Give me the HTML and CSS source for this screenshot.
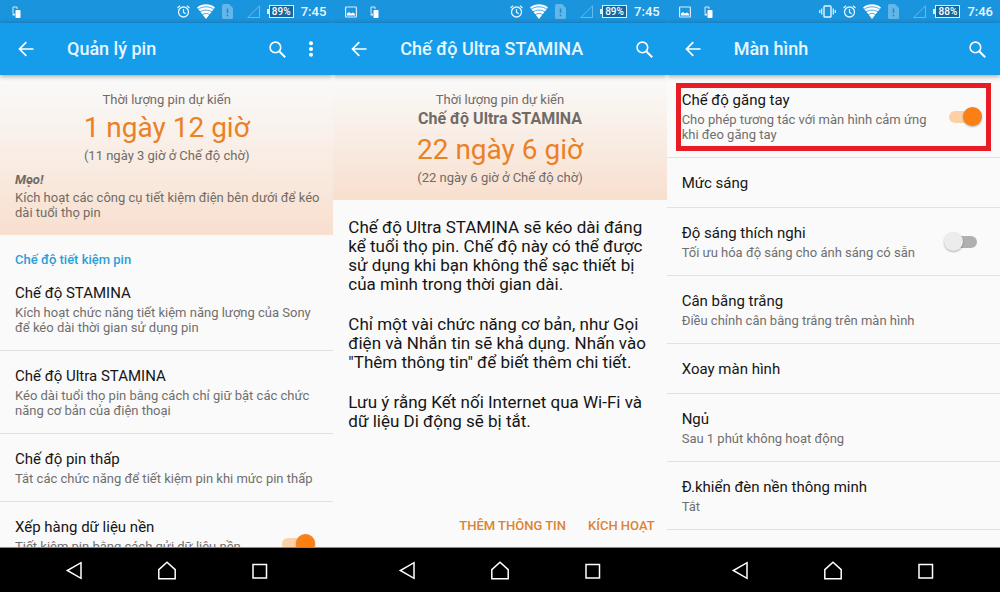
FILE: index.html
```html
<!DOCTYPE html>
<html lang="vi">
<head>
  <meta charset="UTF-8" />
  <meta name="viewport" content="width=device-width, initial-scale=1.0" />
  <title>Quản lý pin</title>
  <link rel="stylesheet" href="styles.css">
</head>
<body>
  <svg class="sprite" aria-hidden="true">
    <symbol id="i-handoff" viewBox="0 0 9 12">
      <path d="M1 7V1h4v2" fill="none" stroke="#d5edfb"/>
      <path d="M0.5 7.5h2.5v2h-2.500z" fill="#d5edfb"/>
      <rect x="3.500" y="4" width="5" height="8" rx="0.8" fill="#fff"/>
    </symbol>
    <symbol id="i-image" viewBox="0 0 12 12">
      <rect x="0.600" y="1" width="10.800" height="10" rx="0.5" fill="none" stroke="#d5edfb" stroke-width="1.200"/>
      <path d="M2 9.500V7.500l2-1.500 2 1.500 2-1 2 1.500v1.500z" fill="#fff"/>
    </symbol>
    <symbol id="i-vibrate" viewBox="0 0 17 13">
      <rect x="5" y="1" width="7" height="11" rx="0.8" fill="none" stroke="#e4f5fd" stroke-width="1.400"/>
      <path d="M2.700 3.500v6M0.700 5v3M14.300 3.500v6M16.300 5v3" stroke="#e4f5fd" stroke-width="1.200"/>
    </symbol>
    <symbol id="i-alarm" viewBox="0 0 13 13">
      <circle cx="6.500" cy="7" r="5" fill="none" stroke="#e4f5fd" stroke-width="1.300"/>
      <path d="M6.500 4v3.300l2.200 1.400M0.500 3l2.600-2.200M12.500 3L9.900 0.800" fill="none" stroke="#e4f5fd" stroke-width="1.200"/>
    </symbol>
    <symbol id="i-wifi" viewBox="0 0 18 15">
      <path d="M0 3.500C5-.8 13-.8 18 3.500L9 15z" fill="#fff"/>
      <path d="M0.500 5.600c5-3.700 12-3.700 17 0M2.500 8.200c4-2.800 9-2.800 13 0M4.800 10.900c3-1.900 5.600-1.900 8.400 0" fill="none" stroke="#1a94dc" stroke-width="0.800"/>
    </symbol>
    <symbol id="i-sim" viewBox="0 0 11 15">
      <path d="M0 1.500Q0 0 1.500 0H7l4 4v9.500q0 1.500-1.500 1.500h-8Q0 15 0 13.500z" fill="#62b6e9"/>
      <path d="M5.500 4.500v4.500M5.500 10.500v1.700" stroke="#1a8ad0" stroke-width="1.500"/>
    </symbol>
    <symbol id="i-signal" viewBox="0 0 22 13">
      <path d="M7.800 12.500H19.500V0.800z" fill="none" stroke="#6fc0ee" stroke-width="0.900"/>
    </symbol>
    <symbol id="i-back" viewBox="0 0 16 16">
      <path d="M15.500 8H1.800M8.300 1.200L1.500 8l6.800 6.800" fill="none" stroke="#fff" stroke-width="1.700"/>
    </symbol>
    <symbol id="i-search" viewBox="0 0 17 17">
      <circle cx="6.400" cy="6.400" r="5.300" fill="none" stroke="#fff" stroke-width="1.600"/>
      <path d="M10.200 10.200l6 6" stroke="#fff" stroke-width="2"/>
    </symbol>
    <symbol id="i-more" viewBox="0 0 16 16">
      <circle cx="8" cy="2.200" r="2" fill="#fff"/>
      <circle cx="8" cy="8" r="2" fill="#fff"/>
      <circle cx="8" cy="13.800" r="2" fill="#fff"/>
    </symbol>
    <symbol id="i-nav-back" viewBox="0 0 20 20">
      <path d="M17 2.700v15.600L3.300 10.500z" fill="none" stroke="#fff" stroke-width="1.500"/>
    </symbol>
    <symbol id="i-nav-home" viewBox="0 0 20 20">
      <path d="M1.800 18.700V9.700L10 2.200l8.200 7.500v9z" fill="none" stroke="#fff" stroke-width="1.500"/>
    </symbol>
    <symbol id="i-nav-recent" viewBox="0 0 20 20">
      <rect x="3" y="4.500" width="13.500" height="13.500" fill="none" stroke="#fff" stroke-width="1.500"/>
    </symbol>
  </svg>

  <main class="phones">
    <!-- Battery management -->
    <section class="phone">
      <div class="status">
        <svg class="i-handoff"><use href="#i-handoff"/></svg>
        <div class="status-right">
          <svg class="i-alarm"><use href="#i-alarm"/></svg>
          <svg class="i-wifi"><use href="#i-wifi"/></svg>
          <svg class="i-sim"><use href="#i-sim"/></svg>
          <svg class="i-signal"><use href="#i-signal"/></svg>
          <span class="battery">89%</span>
          <span class="time">7:45</span>
        </div>
      </div>
      <header class="appbar">
        <button aria-label="Quay lại"><svg class="i-back"><use href="#i-back"/></svg></button>
        <h1>Quản lý pin</h1>
        <button aria-label="Tìm kiếm"><svg class="i-search"><use href="#i-search"/></svg></button>
        <button aria-label="Tùy chọn khác"><svg class="i-more"><use href="#i-more"/></svg></button>
      </header>
      <div class="content">
        <div class="estimate">
          <p>Thời lượng pin dự kiến</p>
          <p class="big">1 ngày 12 giờ</p>
          <p>(11 ngày 3 giờ ở Chế độ chờ)</p>
          <div class="tip">
            <strong>Mẹo!</strong>
            <p>Kích hoạt các công cụ tiết kiệm điện bên dưới để kéo dài tuổi thọ pin</p>
          </div>
        </div>
        <h2 class="group">Chế độ tiết kiệm pin</h2>
        <ul class="list">
          <li class="row">
            <div class="text">
              <h3>Chế độ STAMINA</h3>
              <p>Kích hoạt chức năng tiết kiệm năng lượng của Sony để kéo dài thời gian sử dụng pin</p>
            </div>
          </li>
          <li class="row">
            <div class="text">
              <h3>Chế độ Ultra STAMINA</h3>
              <p>Kéo dài tuổi thọ pin bằng cách chỉ giữ bật các chức năng cơ bản của điện thoại</p>
            </div>
          </li>
          <li class="row">
            <div class="text">
              <h3>Chế độ pin thấp</h3>
              <p>Tắt các chức năng để tiết kiệm pin khi mức pin thấp</p>
            </div>
          </li>
          <li class="row">
            <label class="text two-line" for="queue">
              <span class="title">Xếp hàng dữ liệu nền</span>
              <span class="summary">Tiết kiệm pin bằng cách gửi dữ liệu nền</span>
            </label>
            <input class="switch" type="checkbox" id="queue" checked>
          </li>
        </ul>
      </div>
      <nav class="navbar">
        <button aria-label="Trở lại"><svg><use href="#i-nav-back"/></svg></button>
        <button aria-label="Màn hình chính"><svg><use href="#i-nav-home"/></svg></button>
        <button aria-label="Ứng dụng gần đây"><svg><use href="#i-nav-recent"/></svg></button>
      </nav>
    </section>

    <!-- Ultra STAMINA -->
    <section class="phone">
      <div class="status">
        <svg class="i-image"><use href="#i-image"/></svg>
        <svg class="i-handoff"><use href="#i-handoff"/></svg>
        <div class="status-right">
          <svg class="i-alarm"><use href="#i-alarm"/></svg>
          <svg class="i-wifi"><use href="#i-wifi"/></svg>
          <svg class="i-sim"><use href="#i-sim"/></svg>
          <svg class="i-signal"><use href="#i-signal"/></svg>
          <span class="battery">89%</span>
          <span class="time">7:45</span>
        </div>
      </div>
      <header class="appbar">
        <button aria-label="Quay lại"><svg class="i-back"><use href="#i-back"/></svg></button>
        <h1>Chế độ Ultra STAMINA</h1>
        <button aria-label="Tìm kiếm"><svg class="i-search"><use href="#i-search"/></svg></button>
      </header>
      <div class="content">
        <div class="estimate">
          <p>Thời lượng pin dự kiến</p>
          <p class="mode">Chế độ Ultra STAMINA</p>
          <p class="big">22 ngày 6 giờ</p>
          <p>(22 ngày 6 giờ ở Chế độ chờ)</p>
        </div>
        <div class="about">
          <p>Chế độ Ultra STAMINA sẽ kéo dài đáng kể tuổi thọ pin. Chế độ này có thể được sử dụng khi bạn không thể sạc thiết bị của mình trong thời gian dài.</p>
          <p>Chỉ một vài chức năng cơ bản, như Gọi điện và Nhắn tin sẽ khả dụng. Nhấn vào "Thêm thông tin" để biết thêm chi tiết.</p>
          <p>Lưu ý rằng Kết nối Internet qua Wi-Fi và dữ liệu Di động sẽ bị tắt.</p>
        </div>
        <div class="actions">
          <button>THÊM THÔNG TIN</button>
          <button>KÍCH HOẠT</button>
        </div>
      </div>
      <nav class="navbar">
        <button aria-label="Trở lại"><svg><use href="#i-nav-back"/></svg></button>
        <button aria-label="Màn hình chính"><svg><use href="#i-nav-home"/></svg></button>
        <button aria-label="Ứng dụng gần đây"><svg><use href="#i-nav-recent"/></svg></button>
      </nav>
    </section>

    <!-- Display -->
    <section class="phone">
      <div class="status">
        <svg class="i-image"><use href="#i-image"/></svg>
        <svg class="i-handoff"><use href="#i-handoff"/></svg>
        <div class="status-right">
          <svg class="i-vibrate"><use href="#i-vibrate"/></svg>
          <svg class="i-alarm"><use href="#i-alarm"/></svg>
          <svg class="i-wifi"><use href="#i-wifi"/></svg>
          <svg class="i-sim"><use href="#i-sim"/></svg>
          <svg class="i-signal"><use href="#i-signal"/></svg>
          <span class="battery">88%</span>
          <span class="time">7:46</span>
        </div>
      </div>
      <header class="appbar">
        <button aria-label="Quay lại"><svg class="i-back"><use href="#i-back"/></svg></button>
        <h1>Màn hình</h1>
        <button aria-label="Tìm kiếm"><svg class="i-search"><use href="#i-search"/></svg></button>
      </header>
      <div class="content">
        <ul class="list">
          <li class="row marked">
            <label class="text" for="glove">
              <span class="title">Chế độ găng tay</span>
              <span class="summary">Cho phép tương tác với màn hình cảm ứng khi đeo găng tay</span>
            </label>
            <input class="switch" type="checkbox" id="glove" checked>
          </li>
          <li class="row">
            <div class="text">
              <h3>Mức sáng</h3>
            </div>
          </li>
          <li class="row">
            <label class="text" for="adaptive">
              <span class="title">Độ sáng thích nghi</span>
              <span class="summary">Tối ưu hóa độ sáng cho ánh sáng có sẵn</span>
            </label>
            <input class="switch" type="checkbox" id="adaptive">
          </li>
          <li class="row">
            <div class="text">
              <h3>Cân bằng trắng</h3>
              <p>Điều chỉnh cân bằng trắng trên màn hình</p>
            </div>
          </li>
          <li class="row">
            <div class="text">
              <h3>Xoay màn hình</h3>
            </div>
          </li>
          <li class="row">
            <div class="text">
              <h3>Ngủ</h3>
              <p>Sau 1 phút không hoạt động</p>
            </div>
          </li>
          <li class="row">
            <div class="text">
              <h3>Đ.khiển đèn nền thông minh</h3>
              <p>Tắt</p>
            </div>
          </li>
        </ul>
      </div>
      <nav class="navbar">
        <button aria-label="Trở lại"><svg><use href="#i-nav-back"/></svg></button>
        <button aria-label="Màn hình chính"><svg><use href="#i-nav-home"/></svg></button>
        <button aria-label="Ứng dụng gần đây"><svg><use href="#i-nav-recent"/></svg></button>
      </nav>
    </section>
  </main>
</body>
</html>
```
FILE: styles.css
```css
* {
  box-sizing: border-box;
}
body {
  margin: 0;
  font-family: Roboto, Arial, sans-serif;
  font-size: 13px;
  line-height: 15px;
  color: #6f6f6f;
  background: #fafafa;
}
h1, h2, h3, p, ul {
  margin: 0;
  padding: 0;
}
button {
  border: 0;
  padding: 0;
  background: none;
  font-family: inherit;
  cursor: pointer;
}
svg {
  display: block;
  flex-shrink: 0;
}
.sprite {
  display: none;
}
.phones {
  display: grid;
  grid-template-columns: repeat(3, 1fr);
}
.phone {
  display: flex;
  flex-direction: column;
  height: 100vh;
  min-width: 0;
  overflow: hidden;
  background: #fafafa;
}

/* status bar */
.status {
  display: flex;
  align-items: center;
  gap: 13px;
  height: 23px;
  padding: 0 7px 0 12px;
  flex-shrink: 0;
  background: #1a94dc;
}
.status-right {
  display: flex;
  align-items: center;
  gap: 7px;
  margin-left: auto;
}
.i-handoff {
  width: 9px;
  height: 12px;
}
.i-image {
  width: 12px;
  height: 12px;
}
.i-vibrate {
  width: 17px;
  height: 13px;
}
.i-alarm {
  width: 13px;
  height: 13px;
}
.i-wifi {
  width: 18px;
  height: 15px;
}
.i-sim {
  width: 11px;
  height: 15px;
}
.i-signal {
  width: 22px;
  height: 13px;
}
.battery {
  position: relative;
  width: 25px;
  height: 13px;
  border: 1px solid #d9f0fb;
  background: #17669a;
  color: #fff;
  font-size: 10px;
  font-weight: 500;
  line-height: 11px;
  text-align: center;
}
.battery::before {
  content: "";
  position: absolute;
  left: -3px;
  top: 3px;
  width: 2px;
  height: 5px;
  background: #d9f0fb;
}
.time {
  color: #e9f7fe;
  font-size: 13px;
  font-weight: 500;
}

/* app bar */
.appbar {
  position: relative;
  display: flex;
  align-items: center;
  gap: 17px;
  height: 52px;
  padding: 0 14px 0 18px;
  flex-shrink: 0;
  background: #159ceb;
  box-shadow: 0 1px 5px rgba(0, 0, 0, 0.4);
}
.appbar h1 {
  flex: 1;
  padding-left: 16px;
  color: #e6f7ff;
  font-size: 18px;
  font-weight: 500;
  line-height: 24px;
  white-space: nowrap;
}
.i-back, .i-more {
  width: 16px;
  height: 16px;
}
.i-search {
  width: 17px;
  height: 17px;
}

.content {
  display: flex;
  flex-direction: column;
  flex: 1;
  min-height: 0;
  overflow: hidden;
}

/* battery estimate */
.estimate {
  padding: 17px 12px 14px;
  flex-shrink: 0;
  background: linear-gradient(#fafafa, #f9f0e9 40%, #f8dfce);
  color: #716b66;
  text-align: center;
  line-height: 16px;
}
.estimate .big {
  color: #ea8126;
  font-size: 28px;
  line-height: 40px;
}
.estimate .mode {
  font-size: 16px;
  font-weight: bold;
  line-height: 22px;
}
.tip {
  margin-top: 8px;
  padding: 0 0 1px 3px;
  text-align: left;
  line-height: 15px;
}
.tip strong {
  display: block;
  margin-bottom: 3px;
  font-style: italic;
}
.group {
  padding: 17px 15px 0;
  flex-shrink: 0;
  color: #2a9fd8;
  font-size: 13px;
  font-weight: 500;
  line-height: 16px;
}

/* settings rows */
.list {
  list-style: none;
}
.row {
  position: relative;
  display: flex;
  align-items: center;
  gap: 12px;
  padding: 16px 18px 15px 15px;
  border-bottom: 1px solid #e2e2e2;
}
.text {
  flex: 1;
}
.text h3, .title {
  display: block;
  color: #151515;
  font-size: 15px;
  font-weight: normal;
  line-height: 18px;
}
.text p, .summary {
  display: block;
  margin-top: 3px;
}
.two-line {
  min-height: 51px;
}
.marked::after {
  content: "";
  position: absolute;
  inset: 8px 9px 6px;
  border: 5px solid #e81c24;
  pointer-events: none;
}
.switch {
  appearance: none;
  position: relative;
  width: 38px;
  height: 20px;
  margin: 0;
  flex-shrink: 0;
}
.switch::before {
  content: "";
  position: absolute;
  inset: 4px 5px;
  border-radius: 6px;
  background: #b0b0b0;
}
.switch::after {
  content: "";
  position: absolute;
  left: 0;
  top: 0;
  width: 19px;
  height: 19px;
  border-radius: 50%;
  background: #ececec;
  box-shadow: 0 1px 2px rgba(0, 0, 0, 0.3);
}
.switch:checked::before {
  background: #fdd0a8;
}
.switch:checked::after {
  left: auto;
  right: 0;
  background: #fa8016;
}

/* Ultra STAMINA description */
.about {
  padding: 18px 12px 0 15px;
  color: #151515;
  font-size: 17px;
  line-height: 19px;
}
.about p + p {
  margin-top: 21px;
}
.actions {
  display: flex;
  justify-content: flex-end;
  gap: 22px;
  margin-top: auto;
  padding: 0 12px 13px;
}
.actions button {
  color: #df822f;
  font-size: 13px;
  font-weight: 500;
  line-height: 16px;
}

.navbar {
  display: grid;
  grid-template-columns: repeat(3, 1fr);
  align-items: center;
  justify-items: center;
  height: 45px;
  padding: 0 27px;
  flex-shrink: 0;
  border-top: 1px solid #8a8a8a;
  background: #000;
}
.navbar svg {
  width: 20px;
  height: 20px;
}
```
